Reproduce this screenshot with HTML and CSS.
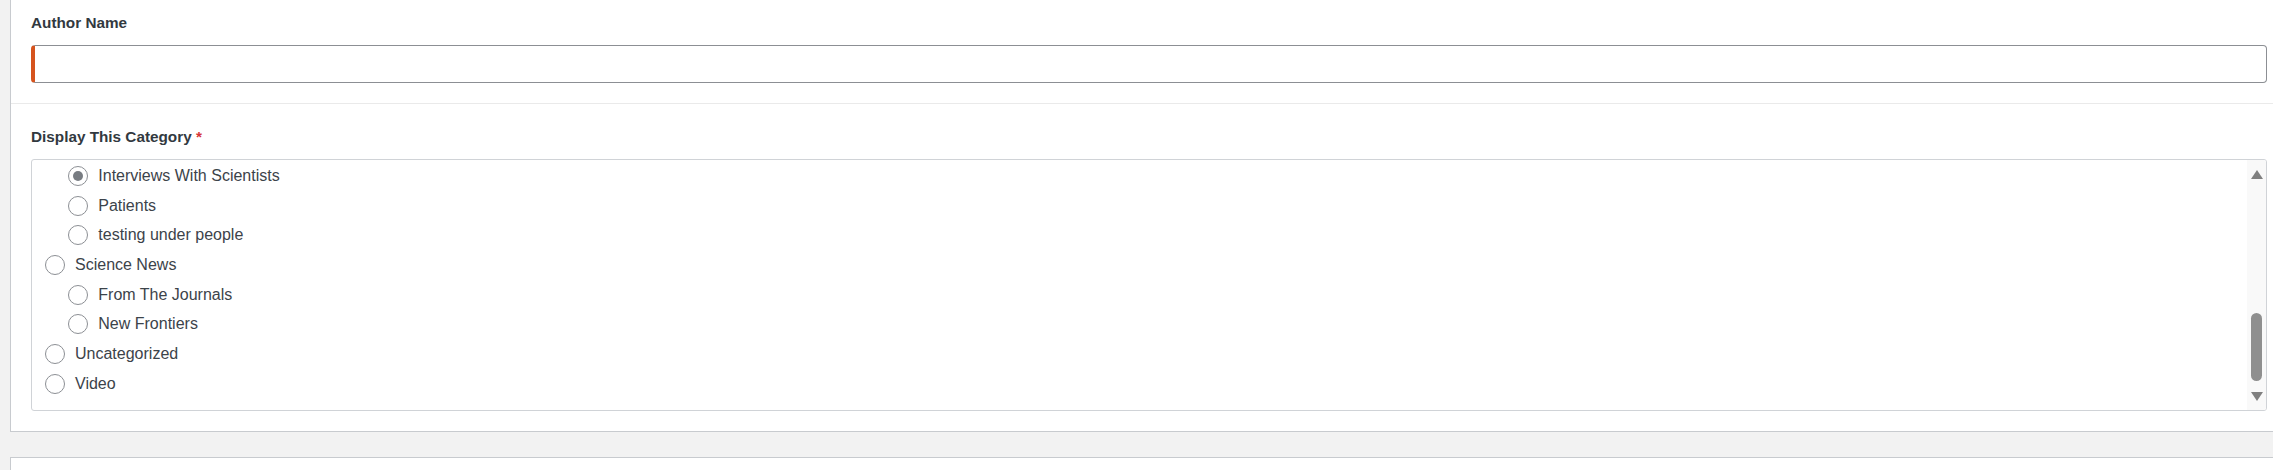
FILE: index.html
```html
<!DOCTYPE html>
<html lang="en">
<head>
<meta charset="utf-8">
<title>Fields</title>
<link rel="stylesheet" href="styles.css">
</head>
<body>
<div class="panel">
  <div class="field field-first">
    <label class="field-label" for="author">Author Name</label>
    <input class="text-input" id="author" type="text">
  </div>
  <div class="field field-divided">
    <label class="field-label">Display This Category <span class="req">*</span></label>
    <div class="choice-box">
      <ul class="choice-list">
        <li class="choice child"><input type="radio" class="radio" name="cat" checked><span>Interviews With Scientists</span></li>
        <li class="choice child"><input type="radio" class="radio" name="cat"><span>Patients</span></li>
        <li class="choice child"><input type="radio" class="radio" name="cat"><span>testing under people</span></li>
        <li class="choice"><input type="radio" class="radio" name="cat"><span>Science News</span></li>
        <li class="choice child"><input type="radio" class="radio" name="cat"><span>From The Journals</span></li>
        <li class="choice child"><input type="radio" class="radio" name="cat"><span>New Frontiers</span></li>
        <li class="choice"><input type="radio" class="radio" name="cat"><span>Uncategorized</span></li>
        <li class="choice"><input type="radio" class="radio" name="cat"><span>Video</span></li>
      </ul>
      <div class="scrollbar">
        <svg class="arrow" viewBox="0 0 12 9"><polygon points="6,0 12,9 0,9"/></svg>
        <div class="thumb"></div>
        <svg class="arrow" viewBox="0 0 12 9"><polygon points="0,0 12,0 6,9"/></svg>
      </div>
    </div>
  </div>
</div>
<div class="panel panel-next"></div>
</body>
</html>
```

FILE: styles.css
```css
body {
  margin: 0;
  background: #f2f2f2;
  font-family: "Liberation Sans", Arial, sans-serif;
}

.panel {
  margin-left: 10px;
  background: #fff;
  border-left: 1px solid #c8cbcf;
  border-bottom: 1px solid #c8cbcf;
}

.field {
  padding: 22.5px 6px 20px 20px;
}

.field-first {
  padding-top: 12.5px;
}

.field-divided {
  border-top: 1px solid #eaeaea;
}

.field-label {
  display: block;
  font-size: 15.3px;
  font-weight: 700;
  line-height: 20px;
  color: #32393f;
  margin-bottom: 12.5px;
}

.req {
  color: #d63638;
}

.text-input {
  display: block;
  box-sizing: border-box;
  width: 100%;
  height: 38px;
  margin: 0;
  padding: 0 8px;
  border: 1px solid #8c8f94;
  border-left: 4px solid #d6541e;
  border-radius: 4px;
  background: #fff;
  outline: none;
}

.choice-box {
  display: flex;
  box-sizing: border-box;
  height: 252px;
  border: 1px solid #d0d3d7;
  border-radius: 3px;
  overflow: hidden;
}

.choice-list {
  flex: 1;
  list-style: none;
  margin: 0;
  padding: 1.2px 0 0 13px;
}

.choice {
  display: flex;
  align-items: center;
  gap: 10px;
  height: 29.7px;
  font-size: 16px;
  color: #3c434a;
}

.choice.child {
  margin-left: 23.3px;
}

.radio {
  appearance: none;
  -webkit-appearance: none;
  flex: none;
  display: grid;
  place-items: center;
  box-sizing: border-box;
  width: 20px;
  height: 20px;
  margin: 0;
  border: 1px solid #8c8f94;
  border-radius: 50%;
  background: #fff;
}

.radio:checked::before {
  content: "";
  width: 10px;
  height: 10px;
  border-radius: 50%;
  background: #787c82;
}

.scrollbar {
  flex: none;
  box-sizing: border-box;
  width: 19px;
  padding: 10px 0 9px;
  display: flex;
  flex-direction: column;
  align-items: center;
  background: #f9f9f9;
}

.arrow {
  display: block;
  width: 12px;
  height: 9px;
  fill: #808080;
}

.thumb {
  margin-top: auto;
  margin-bottom: 11px;
  width: 11px;
  height: 68px;
  border-radius: 5.5px;
  background: #8f8f8f;
}

.panel-next {
  margin-top: 25px;
  height: 12px;
  border-top: 1px solid #c8cbcf;
  border-bottom: none;
}
```
